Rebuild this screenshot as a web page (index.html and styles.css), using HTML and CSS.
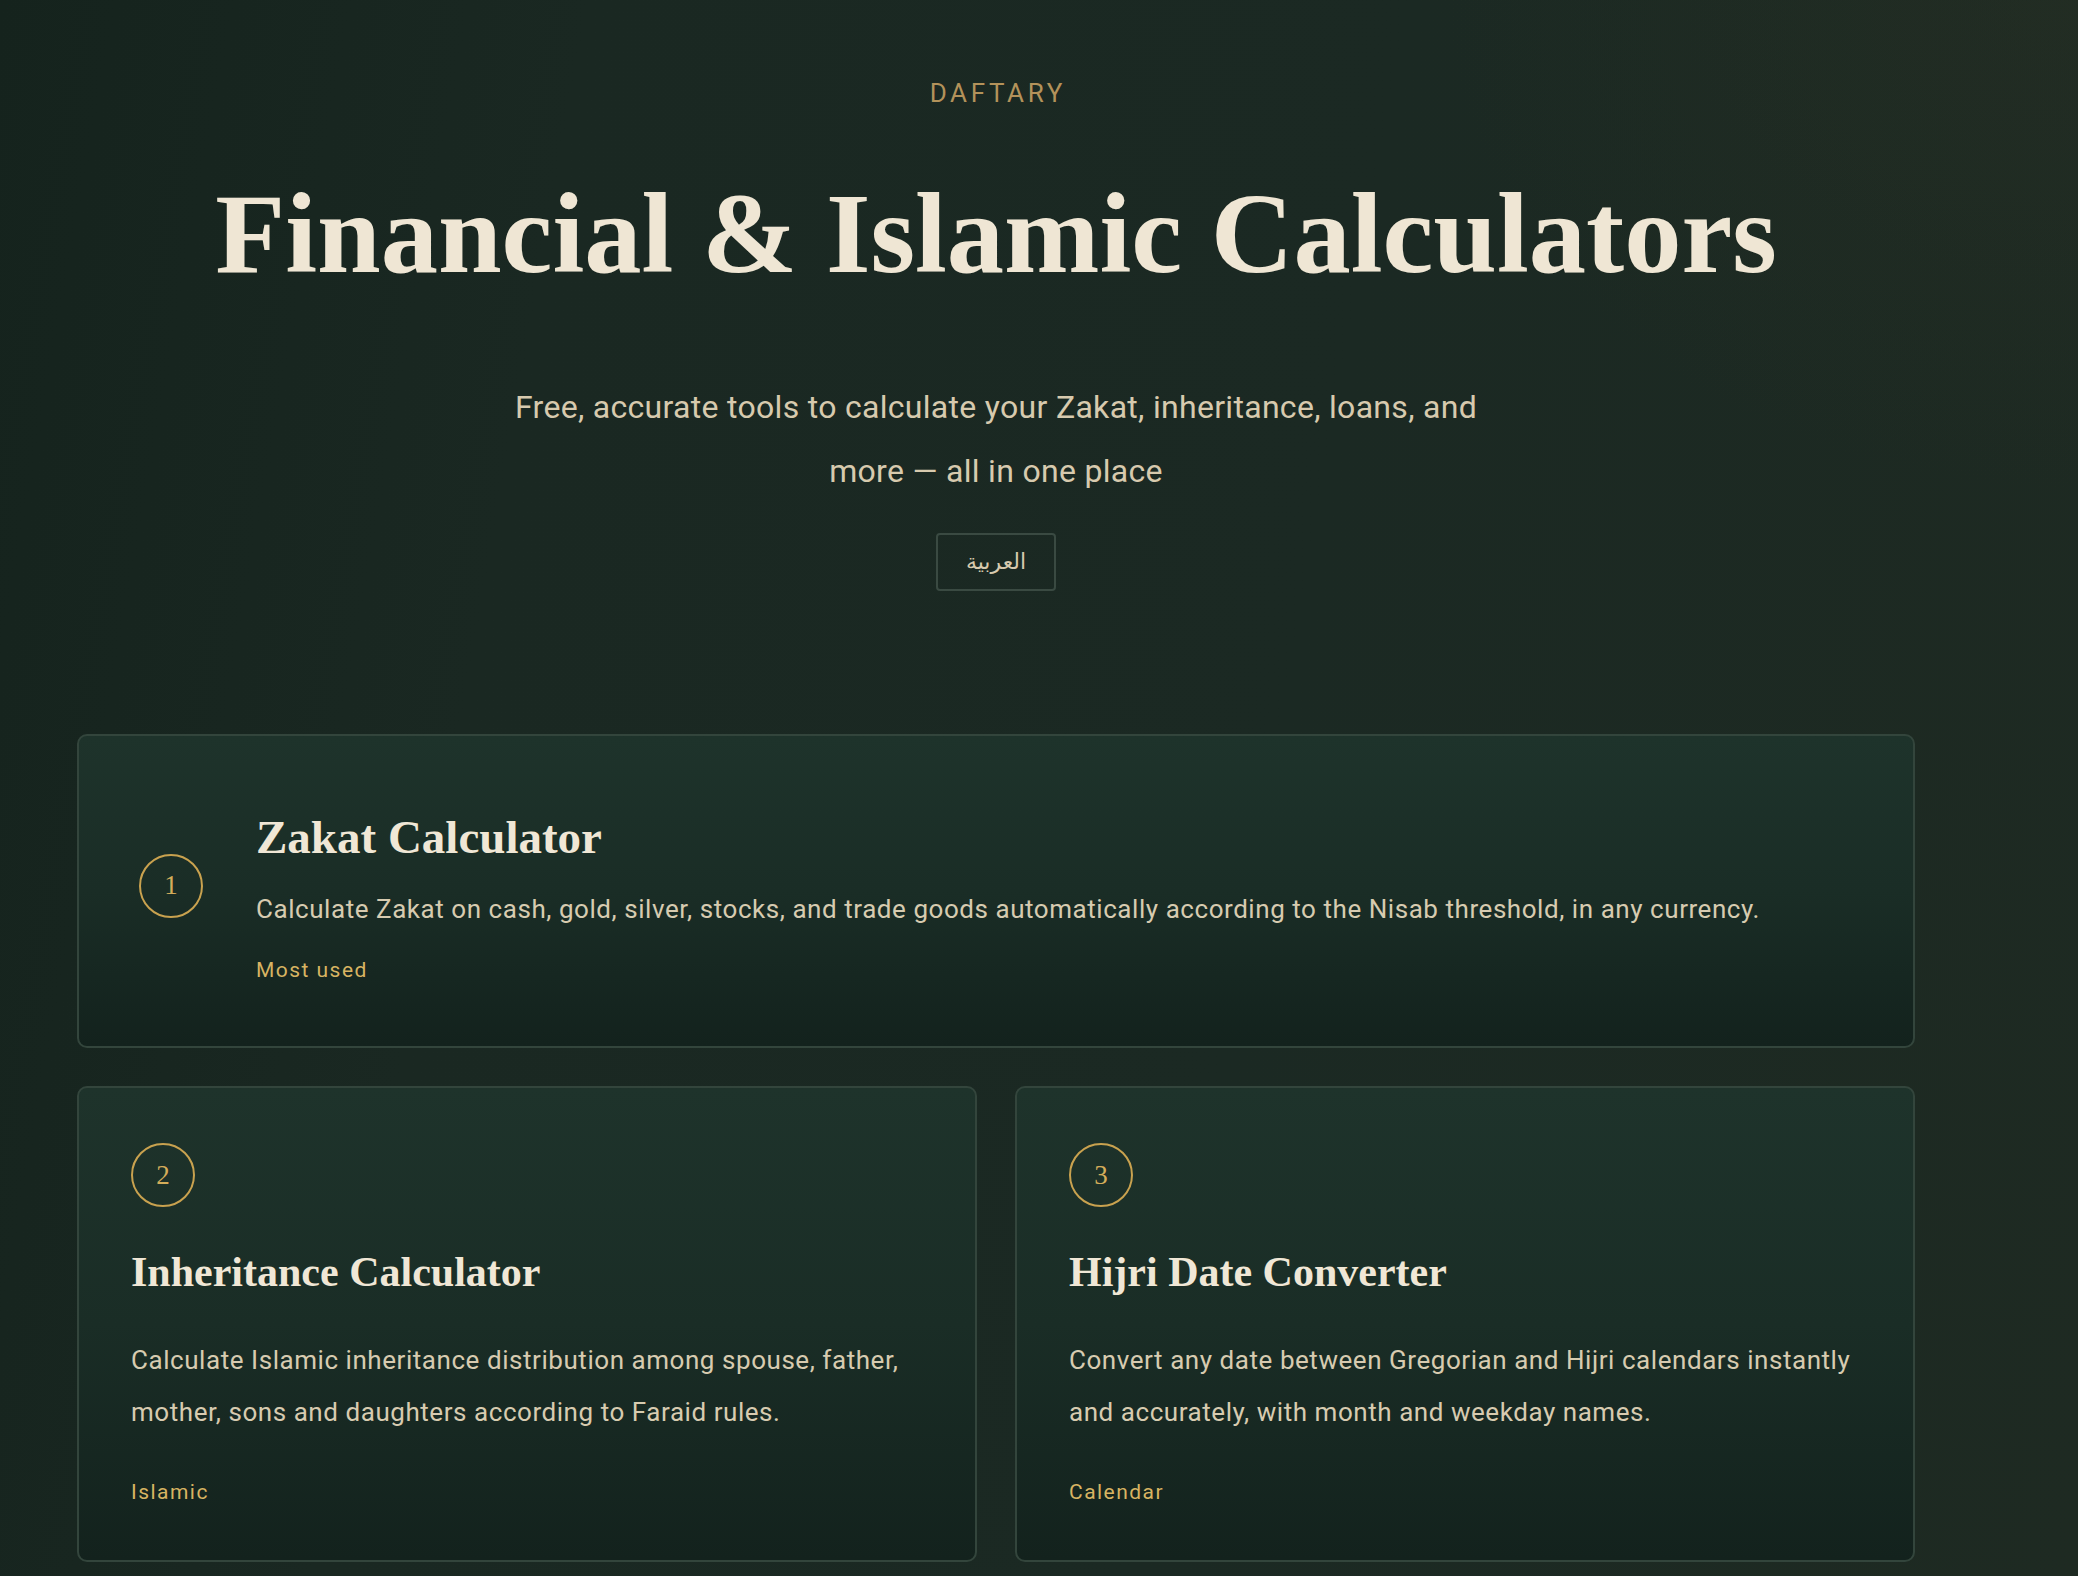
FILE: index.html
```html
<!DOCTYPE html>
<html lang="en">
<head>
<meta charset="utf-8">
<title>Daftary — Financial &amp; Islamic Calculators</title>
<link rel="stylesheet" href="styles.css">
</head>
<body>
<main class="page">
  <header class="hero">
    <div class="brand">DAFTARY</div>
    <h1 class="hero-title">Financial &amp; Islamic Calculators</h1>
    <p class="hero-sub">Free, accurate tools to calculate your Zakat, inheritance, loans, and more — all in one place</p>
    <button class="lang-btn" lang="ar" dir="rtl">العربية</button>
  </header>

  <section class="tools">
    <article class="card card-wide">
      <div class="num">1</div>
      <div class="card-body">
        <h2 class="card-title card-title-lg">Zakat Calculator</h2>
        <p class="card-desc">Calculate Zakat on cash, gold, silver, stocks, and trade goods automatically according to the Nisab threshold, in any currency.</p>
        <span class="tag">Most used</span>
      </div>
    </article>

    <div class="card-row">
      <article class="card card-tall">
        <div class="num">2</div>
        <h2 class="card-title">Inheritance Calculator</h2>
        <p class="card-desc">Calculate Islamic inheritance distribution among spouse, father, mother, sons and daughters according to Faraid rules.</p>
        <span class="tag">Islamic</span>
      </article>
      <article class="card card-tall">
        <div class="num">3</div>
        <h2 class="card-title">Hijri Date Converter</h2>
        <p class="card-desc">Convert any date between Gregorian and Hijri calendars instantly and accurately, with month and weekday names.</p>
        <span class="tag">Calendar</span>
      </article>
    </div>
  </section>
</main>
</body>
</html>
```

FILE: styles.css
```css
* { box-sizing: border-box; }

html, body {
  margin: 0;
  padding: 0;
}

body {
  min-height: 100vh;
  background:
    radial-gradient(ellipse 900px 700px at 100% 0%, rgba(40, 48, 36, 0.45), rgba(40, 48, 36, 0) 70%),
    linear-gradient(100deg, #15231d 0%, #1a2822 25%, #1b2923 60%, #1e2a22 100%);
  color: #efe6d4;
  font-family: Roboto, "Noto Sans", "Liberation Sans", sans-serif;
  overflow: hidden;
}

.page {
  width: 1838px;
  margin-left: 77px;
}

.hero {
  display: flex;
  flex-direction: column;
  align-items: center;
  padding-top: 78px;
  text-align: center;
}

.brand {
  font-size: 26px;
  line-height: 30px;
  letter-spacing: 0.14em;
  margin-right: -0.14em;
  color: #b3925a;
  font-weight: 400;
}

.hero-title {
  margin: 63px 0 0;
  font-family: "Liberation Serif", "DejaVu Serif", serif;
  font-weight: 700;
  font-size: 114.5px;
  line-height: 1.1;
  color: #efe6d4;
  letter-spacing: 0;
}

.hero-sub {
  margin: 78px 0 0;
  max-width: 1000px;
  font-size: 32px;
  line-height: 64px;
  letter-spacing: 0.3px;
  color: #d7caae;
}

.lang-btn {
  margin-top: 30px;
  width: 120px;
  height: 58px;
  background: transparent;
  border: 2px solid #3a4a42;
  border-radius: 4px;
  color: #d7caae;
  font-family: "DejaVu Sans", sans-serif;
  font-size: 22px;
  cursor: pointer;
}

.tools {
  margin-top: 143px;
  display: flex;
  flex-direction: column;
  gap: 38px;
}

.card {
  border: 2px solid #33453c;
  border-radius: 10px;
  background: linear-gradient(180deg, #1e332b 0%, #1a2d26 50%, #13221d 100%);
}

.card-wide {
  display: flex;
  align-items: center;
  gap: 53px;
  padding: 73px 60px 60px;
}

.card-wide .num {
  margin-top: -24px;
}

.card-row {
  display: grid;
  grid-template-columns: 1fr 1fr;
  gap: 38px;
}

.card-tall {
  display: flex;
  flex-direction: column;
  align-items: flex-start;
  padding: 55px 52px 52px;
}

.num {
  flex: none;
  width: 64px;
  height: 64px;
  border: 2px solid #c9a24f;
  border-radius: 50%;
  display: flex;
  align-items: center;
  justify-content: center;
  font-family: "Liberation Serif", "DejaVu Serif", serif;
  font-size: 27px;
  color: #d4ad5a;
}

.card-body {
  display: flex;
  flex-direction: column;
  align-items: flex-start;
}

.card-title {
  margin: 40px 0 0;
  font-family: "Liberation Serif", "DejaVu Serif", serif;
  font-weight: 700;
  font-size: 42px;
  line-height: 1.2;
  color: #f0e7d6;
}

.card-title-lg {
  margin: 0;
  font-size: 47px;
}

.card-desc {
  margin: 36px 0 0;
  font-size: 26px;
  line-height: 52px;
  letter-spacing: 0.55px;
  color: #d7cbb0;
}

.card-wide .card-desc {
  margin-top: 18px;
}

.tag {
  margin-top: 39px;
  font-size: 21px;
  line-height: 31px;
  letter-spacing: 0.07em;
  color: #d8b462;
}

.card-wide .tag {
  margin-top: 20px;
}
```
